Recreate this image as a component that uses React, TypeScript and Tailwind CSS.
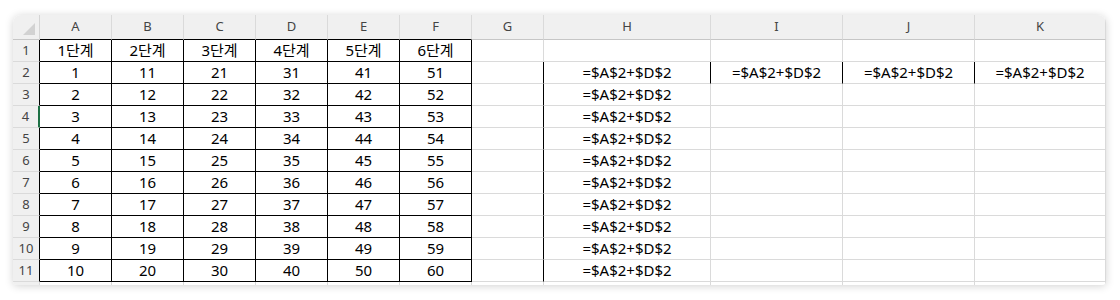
const cols = ["A", "B", "C", "D", "E", "F", "G", "H", "I", "J", "K"];
const widths = ["w-[72px]", "w-[72px]", "w-[72px]", "w-[72px]", "w-[72px]", "w-[72px]", "w-[72px]", "w-[167px]", "w-[132px]", "w-[132px]", "w-[131px]"];

const FORMULA = "=$A$2+$D$2";

function cellText(row: number, col: number): string {
  if (col <= 5) {
    if (row === 1) return `${col + 1}단계`;
    return String(col * 10 + row - 1);
  }
  if (col === 7) return row >= 2 ? FORMULA : "";
  if (col >= 8 && row === 2) return FORMULA;
  return "";
}

function rightBlack(row: number, col: number) {
  if (row < 1 || row > 11) return false;
  if (col <= 5) return true;
  if (col === 6 && row >= 2) return true;
  if ((col === 7 || col === 8 || col === 9) && row === 2) return true;
  return false;
}

function bottomBlack(row: number, col: number) {
  return col <= 5 && row >= 0 && row <= 11;
}

function Corner() {
  return (
    <div className="w-[27px] h-[25px] bg-[#f0f0f0] border-r border-b border-r-[#d4d4d4] border-b-[#c6c6c6] flex items-end justify-end pr-[4px] pb-[4px] shrink-0">
      <svg width="12" height="12" viewBox="0 0 12 12">
        <polygon points="12,0 12,12 0,12" fill="#d2d2d2" />
      </svg>
    </div>
  );
}

function HeaderRow() {
  return (
    <div className="flex h-[25px]">
      <Corner />
      {cols.map((c, i) => (
        <div
          key={c}
          className={`${widths[i]} shrink-0 h-[25px] bg-[#f0f0f0] border-r border-r-[#dadada] border-b ${bottomBlack(0, i) ? "border-b-black" : "border-b-[#c6c6c6]"} flex items-center justify-center text-[13px] text-[#444]`}
        >
          {c}
        </div>
      ))}
    </div>
  );
}

function Row({ row }: { row: number }) {
  const selected = row === 4;
  return (
    <div className="flex h-[22px]">
      <div
        className={`w-[27px] shrink-0 h-[22px] bg-[#f0f0f0] border-b border-b-[#dadada] flex items-center justify-center text-[13px] text-[#444] ${selected ? "border-r-2 border-r-[#1e7145]" : "border-r border-r-black"}`}
      >
        {row}
      </div>
      {cols.map((c, i) => (
        <div
          key={c}
          className={`${widths[i]} shrink-0 h-[22px] bg-white border-r border-b ${rightBlack(row, i) ? "border-r-black" : "border-r-[#dadada]"} ${bottomBlack(row, i) ? "border-b-black" : "border-b-[#dadada]"} flex items-center justify-center text-[15px] text-black leading-none`}
        >
          {cellText(row, i)}
        </div>
      ))}
    </div>
  );
}

export default function App() {
  const rows = Array.from({ length: 11 }, (_, i) => i + 1);
  return (
    <div className="w-[1120px] h-[300px] bg-white pt-[15px] pl-[13px]" style={{ fontFamily: '"Noto Sans", "Noto Sans CJK KR", sans-serif' }}>
      <div className="w-[1093px] h-[270px] rounded-t-lg rounded-b-sm overflow-hidden bg-white shadow-[0_1px_8px_rgba(0,0,0,0.18)]">
        <HeaderRow />
        {rows.map((r) => (
          <Row key={r} row={r} />
        ))}
        <div className="flex h-[3px]">
          <div className="w-[27px] shrink-0 h-[3px] bg-[#f0f0f0] border-r border-r-[#dadada]" />
          {cols.map((c, i) => (
            <div key={c} className={`${widths[i]} shrink-0 h-[3px] border-r border-r-[#dadada]`} />
          ))}
        </div>
      </div>
    </div>
  );
}
